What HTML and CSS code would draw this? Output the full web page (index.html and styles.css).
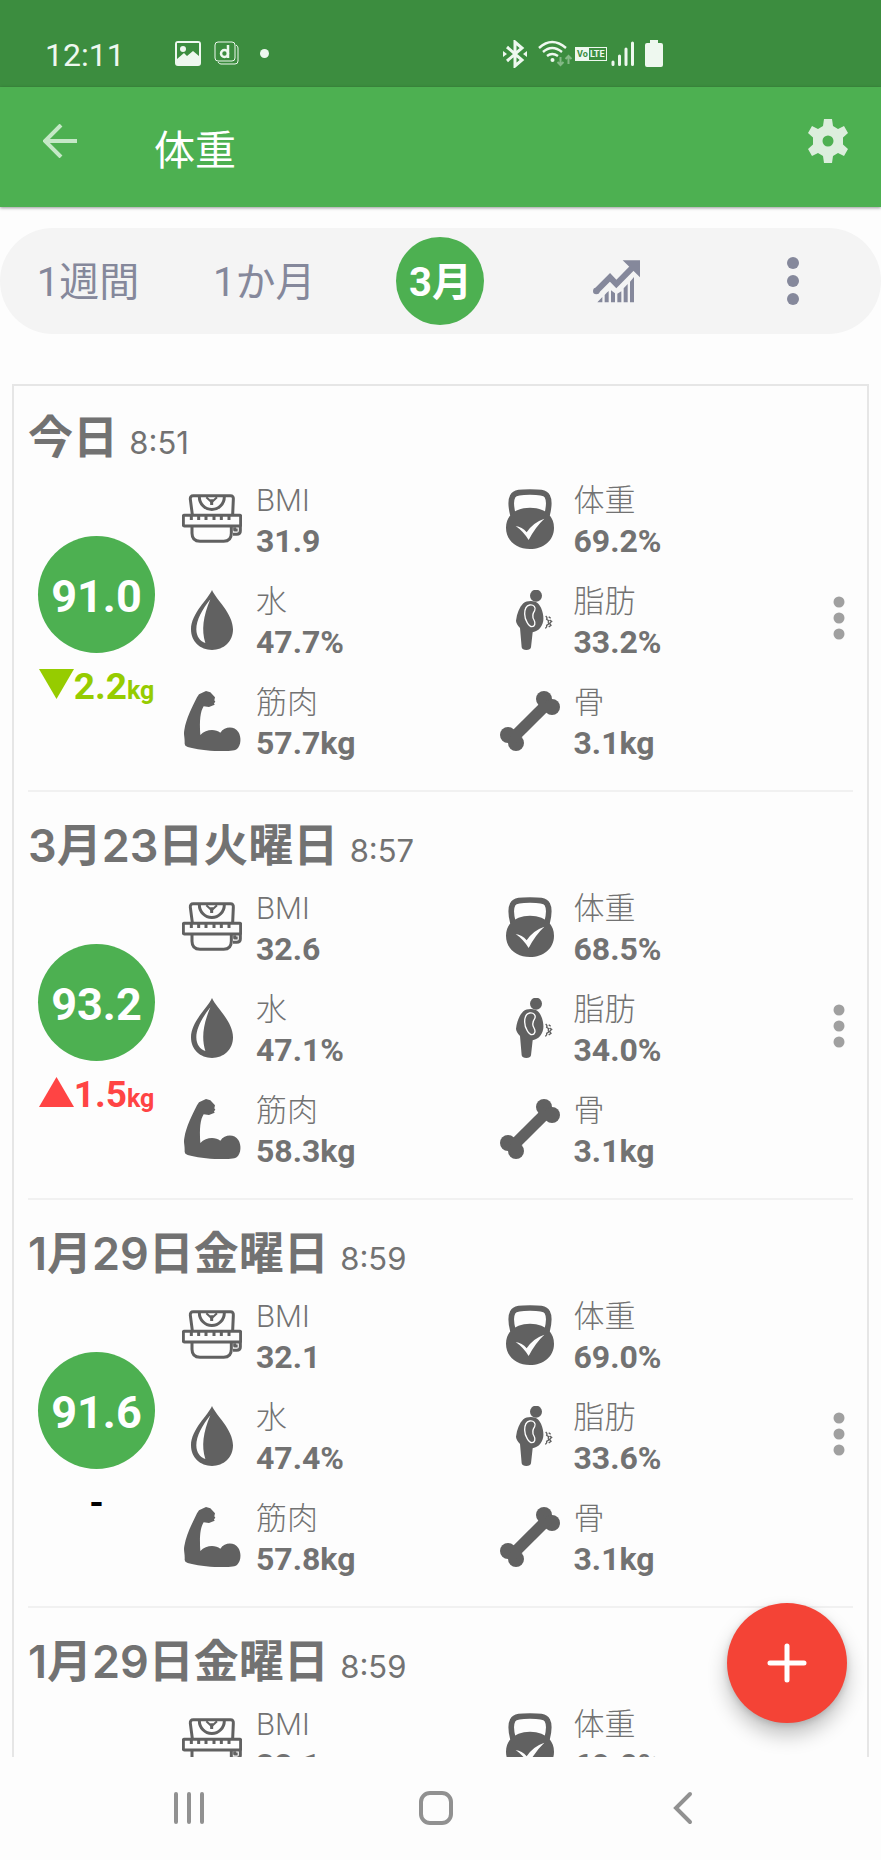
FILE: index.html
```html
<!DOCTYPE html>
<html lang="ja">
<head>
<meta charset="utf-8">
<meta name="viewport" content="width=device-width, initial-scale=1">
<title>体重</title>
<link rel="stylesheet" href="styles.css">
</head>
<body>
<svg class="sprite" aria-hidden="true">
  <symbol id="i-bmi" viewBox="549 57 180 180">
    <g fill="none" stroke="currentColor" stroke-width="9" stroke-linejoin="round">
      <path d="M580 134 574 88Q573 77 583 77H694Q704 77 703 88L701 134"/>
      <rect x="553" y="136" width="172" height="32" rx="3"/>
      <path d="M601 80A37 38 0 0 0 676 80"/>
      <path d="M579 170V190Q579 214 603 214H674Q697 214 697 190V170"/>
      <path d="M724 168V183Q724 193 713 193H702M707 172V180H716"/>
      <path d="M577 138V150M599 138V150M621 138V150M645 138V150M667 138V150M690 138V150M638 88V105"/>
      <path stroke-width="6" d="M622 82 638 97 654 82"/>
    </g>
  </symbol>
  <symbol id="i-water" viewBox="549 360 180 180">
    <path fill="currentColor" fill-rule="evenodd" d="M639 360C650 387 702 430 702 478C702 515 674 540 639 540S576 515 576 478C576 430 628 387 639 360ZM634 388C610 418 592 450 592 478C592 500 604 515 619 519C607 480 612 440 634 388Z"/>
  </symbol>
  <symbol id="i-muscle" viewBox="549 663 180 180">
    <path fill="currentColor" d="M621 663 634 667 648 682 646 691 649 695 645 700 647 704 630 711 614 709C604 725 601 750 604 795C620 778 648 776 664 788C678 768 706 768 718 786C728 802 726 826 714 837C705 843 690 843 660 843C625 843 590 838 566 831Q557 828 557 822C558 800 553 795 556 780C562 745 578 715 594 682L600 673Z"/>
  </symbol>
  <symbol id="i-weight" viewBox="60 57 180 180">
    <path fill="none" stroke="currentColor" stroke-width="17" d="M99 135C92 108 92 90 98 79C104 66 125 66 150 66S196 66 202 79C208 90 208 108 201 135"/>
    <path fill="currentColor" fill-rule="evenodd" d="M150 113C175 113 197 122 209 136C217 146 222 158 222 173C222 212 190 237 150 237S78 212 78 173C78 158 83 146 91 136C103 122 125 113 150 113ZM107 168Q130 184 146 210Q165 172 193 146Q158 158 140 187Q126 170 107 168Z"/>
  </symbol>
  <symbol id="i-fat" viewBox="60 360 180 180">
    <circle cx="168" cy="377" r="18" fill="currentColor"/>
    <path fill="currentColor" d="M130 400C140 391 165 390 175 401C188 415 194 445 188 460C182 478 170 484 158 487L153 532Q151 540 139 540T125 532L120 474Q108 460 108 452C111 430 118 412 130 400Z"/>
    <path fill="none" stroke="#fff" stroke-width="4" d="M149 405C161 403 169 412 164 422C157 432 157 442 162 450C168 460 164 470 156 470C147 470 134 450 134 432C134 418 138 407 149 405Z"/>
    <path fill="none" stroke="currentColor" stroke-width="4" d="M197 438Q203 443 200 448L206 452Q203 457 206 462L200 466Q202 471 196 475M206 440 212 445M209 450 215 454 209 460 213 466 206 471"/>
  </symbol>
  <symbol id="i-bone" viewBox="60 663 180 180">
    <g fill="currentColor"><circle cx="192" cy="687" r="24"/><circle cx="216" cy="711" r="24"/><circle cx="84" cy="795" r="24"/><circle cx="108" cy="819" r="24"/></g>
    <path stroke="currentColor" stroke-width="34" d="M98 805 202 701"/>
  </symbol>
  <symbol id="i-more" viewBox="0 0 12 44">
    <g fill="currentColor"><circle cx="6" cy="6" r="5.5"/><circle cx="6" cy="22" r="5.5"/><circle cx="6" cy="38" r="5.5"/></g>
  </symbol>
</svg>

<div class="status">
  <span class="clock">12:11</span>
  <svg class="st-image" viewBox="0 0 26 25"><path fill="currentColor" fill-rule="evenodd" d="M3 0H23Q26 0 26 3V22Q26 25 23 25H3Q0 25 0 22V3Q0 0 3 0ZM2 2V18L9 12 12 15 18 10 24 15V2Z"/><circle cx="8" cy="8" r="3" fill="currentColor"/></svg>
  <svg class="st-app" viewBox="0 0 25 25"><g fill="none" stroke="currentColor"><rect x="1" y="1" width="20" height="19" rx="3"/><path d="M4 21Q5 23 7 23H21Q24 23 24 20V7Q24 5 22 4"/><path stroke-width="2.5" d="M14 4V17"/><circle cx="10.500" cy="12.500" r="3.500" stroke-width="2.500"/></g></svg>
  <span class="st-dot"></span>
  <span class="st-space"></span>
  <svg class="st-bt" viewBox="0 0 24 28"><path fill="none" stroke="currentColor" stroke-width="3" d="M4 7 19 20 12 26V2L19 8 4 21"/><path fill="currentColor" d="M0 11 4 14 0 17ZM24 11 20 14 24 17Z"/></svg>
  <svg class="st-wifi" viewBox="0 0 35 27"><g fill="none" stroke="currentColor" stroke-width="2.400"><path d="M1 8Q14-4 28 8"/><path d="M5 12Q14 4 24 12"/><path d="M9 16Q14 12 20 16"/></g><circle cx="14.500" cy="20" r="2" fill="currentColor"/><g fill="none" stroke="#84b986" stroke-width="2"><path d="M22.500 17V25M19.500 22 22.500 25 25.500 22M30.500 24V16M27.500 19 30.500 16 33.500 19"/></g></svg>
  <svg class="st-volte" viewBox="0 0 32 14"><rect x=".5" y=".5" width="31" height="13" fill="none" stroke="currentColor"/><path fill="currentColor" d="M0 0H14V14H0Z"/><text x="2" y="10" fill="#3c8d3f">Vo</text><text x="15" y="10" fill="currentColor">LTE</text></svg>
  <svg class="st-signal" viewBox="0 0 24 26"><path stroke="currentColor" stroke-width="3" stroke-linecap="round" d="M2 21V23.500M8.500 15V23.500M15 8V23.500M21.500 2V23.500"/></svg>
  <svg class="st-battery" viewBox="0 0 18 27"><path fill="currentColor" d="M5 0H13V3H16Q18 3 18 5V25Q18 27 16 27H2Q0 27 0 25V5Q0 3 2 3H5Z"/></svg>
</div>

<header class="appbar">
  <button class="plain back" aria-label="戻る"><svg viewBox="0 0 34 34"><path fill="none" stroke="currentColor" stroke-width="4" d="M34 17H3M18 1 2 17 18 33"/></svg></button>
  <h1>体重</h1>
  <button class="plain settings" aria-label="設定"><svg viewBox="-22 -22 44 44"><path fill="currentColor" fill-rule="evenodd" d="M-4-22H4L5-15 10-12 16-15 20-8 15-3.500V3.500L20 8 16 15 10 12 5 15 4 22H-4L-5 15-10 12-16 15-20 8-15 3.500V-3.500L-20-8-16-15-10-12-5-15ZM0-5.500A5.500 5.500 0 1 0 0 5.500 5.500 5.500 0 1 0 0-5.500Z"/></svg></button>
</header>

<main class="content">
  <nav class="tabs">
    <button class="tab">1週間</button>
    <button class="tab">1か月</button>
    <button class="tab current"><span class="active">3月</span></button>
    <button class="tab icon" aria-label="グラフ"><svg class="trend" viewBox="456 146 147 132"><path fill="none" stroke="currentColor" stroke-width="18" d="M468 243 510 201 529 221 584 165"/><circle cx="469" cy="242" r="10" fill="currentColor"/><path fill="currentColor" d="M548 150H600V201ZM472 276 487 260V276ZM494 254 500 247 506 242V276H494ZM513 240 525 249V276H513ZM532 250 544 243V276H532ZM551 234 563 221V276H551ZM570 214 582 200V276H570Z"/></svg></button>
    <button class="tab icon" aria-label="その他"><svg class="tab-more" viewBox="0 0 14 50"><g fill="currentColor"><circle cx="7" cy="7" r="6"/><circle cx="7" cy="25" r="6"/><circle cx="7" cy="43" r="6"/></g></svg></button>
  </nav>

  <section class="card">
    <article class="record">
      <h2>今日 <time>8:51</time></h2>
      <div class="body">
        <div class="weight"><span class="disc">91.0</span><p class="delta down"><svg viewBox="0 0 35 30"><path fill="currentColor" d="M0 0H35L17.500 30Z"/></svg>2.2<small>kg</small></p></div>
        <dl class="metrics">
          <div class="metric"><svg><use href="#i-bmi"/></svg><dt>BMI</dt><dd>31.9</dd></div>
          <div class="metric"><svg><use href="#i-weight"/></svg><dt>体重</dt><dd>69.2%</dd></div>
          <div class="metric"><svg><use href="#i-water"/></svg><dt>水</dt><dd>47.7%</dd></div>
          <div class="metric"><svg><use href="#i-fat"/></svg><dt>脂肪</dt><dd>33.2%</dd></div>
          <div class="metric"><svg><use href="#i-muscle"/></svg><dt>筋肉</dt><dd>57.7kg</dd></div>
          <div class="metric"><svg><use href="#i-bone"/></svg><dt>骨</dt><dd>3.1kg</dd></div>
        </dl>
        <button class="plain more" aria-label="メニュー"><svg><use href="#i-more"/></svg></button>
      </div>
    </article>

    <article class="record">
      <h2>3月23日火曜日 <time>8:57</time></h2>
      <div class="body">
        <div class="weight"><span class="disc">93.2</span><p class="delta up"><svg viewBox="0 0 35 30"><path fill="currentColor" d="M0 30H35L17.500 0Z"/></svg>1.5<small>kg</small></p></div>
        <dl class="metrics">
          <div class="metric"><svg><use href="#i-bmi"/></svg><dt>BMI</dt><dd>32.6</dd></div>
          <div class="metric"><svg><use href="#i-weight"/></svg><dt>体重</dt><dd>68.5%</dd></div>
          <div class="metric"><svg><use href="#i-water"/></svg><dt>水</dt><dd>47.1%</dd></div>
          <div class="metric"><svg><use href="#i-fat"/></svg><dt>脂肪</dt><dd>34.0%</dd></div>
          <div class="metric"><svg><use href="#i-muscle"/></svg><dt>筋肉</dt><dd>58.3kg</dd></div>
          <div class="metric"><svg><use href="#i-bone"/></svg><dt>骨</dt><dd>3.1kg</dd></div>
        </dl>
        <button class="plain more" aria-label="メニュー"><svg><use href="#i-more"/></svg></button>
      </div>
    </article>

    <article class="record">
      <h2>1月29日金曜日 <time>8:59</time></h2>
      <div class="body">
        <div class="weight"><span class="disc">91.6</span><p class="delta">-</p></div>
        <dl class="metrics">
          <div class="metric"><svg><use href="#i-bmi"/></svg><dt>BMI</dt><dd>32.1</dd></div>
          <div class="metric"><svg><use href="#i-weight"/></svg><dt>体重</dt><dd>69.0%</dd></div>
          <div class="metric"><svg><use href="#i-water"/></svg><dt>水</dt><dd>47.4%</dd></div>
          <div class="metric"><svg><use href="#i-fat"/></svg><dt>脂肪</dt><dd>33.6%</dd></div>
          <div class="metric"><svg><use href="#i-muscle"/></svg><dt>筋肉</dt><dd>57.8kg</dd></div>
          <div class="metric"><svg><use href="#i-bone"/></svg><dt>骨</dt><dd>3.1kg</dd></div>
        </dl>
        <button class="plain more" aria-label="メニュー"><svg><use href="#i-more"/></svg></button>
      </div>
    </article>

    <article class="record">
      <h2>1月29日金曜日 <time>8:59</time></h2>
      <div class="body">
        <div class="weight"><span class="disc"></span></div>
        <dl class="metrics">
          <div class="metric"><svg><use href="#i-bmi"/></svg><dt>BMI</dt><dd>32.1</dd></div>
          <div class="metric"><svg><use href="#i-weight"/></svg><dt>体重</dt><dd>69.0%</dd></div>
        </dl>
        <button class="plain more" aria-label="メニュー"></button>
      </div>
    </article>
  </section>

  <button class="fab" aria-label="追加"><svg viewBox="0 0 40 40"><path stroke="currentColor" stroke-width="5" stroke-linecap="round" d="M20 3V37M3 20H37"/></svg></button>
</main>

<nav class="sysnav">
  <button class="plain" aria-label="最近"><svg viewBox="0 0 36 36"><path stroke="currentColor" stroke-width="4" stroke-linecap="round" d="M5 4V32M18 4V32M31 4V32"/></svg></button>
  <button class="plain" aria-label="ホーム"><svg viewBox="0 0 36 36"><rect x="3" y="3" width="30" height="30" rx="9" fill="none" stroke="currentColor" stroke-width="4"/></svg></button>
  <button class="plain" aria-label="戻る"><svg viewBox="0 0 36 36"><path fill="none" stroke="currentColor" stroke-width="4" stroke-linecap="round" d="M25 4 11 18 25 32"/></svg></button>
</nav>
</body>
</html>
```
FILE: styles.css
```css
* { box-sizing: border-box; }

body {
  margin: 0;
  height: 100vh;
  display: flex;
  flex-direction: column;
  background: #fdfdfd;
  color: #727272;
  font-family: Roboto, "Noto Sans CJK JP", sans-serif;
}

svg { display: block; flex: none; }
h1, h2, p, dl, dt, dd { margin: 0; }
button { font: inherit; color: inherit; border: 0; padding: 0; background: none; }
.sprite { position: absolute; width: 0; height: 0; }
.plain { display: flex; align-items: center; justify-content: center; }

/* status bar */
.status {
  flex: none;
  display: flex;
  align-items: center;
  height: 87px;
  padding: 20px 218px 0 45px;
  background: #3c8d3f;
  color: #eef8ef;
}
.clock { font-size: 32px; line-height: 40px; width: 130px; padding-top: 3px; }
.st-image { width: 26px; height: 25px; }
.st-app { width: 25px; height: 25px; margin-left: 13px; }
.st-dot { width: 9px; height: 9px; margin-left: 21px; border-radius: 50%; background: currentColor; }
.st-space { flex: 1; }
.st-bt { width: 24px; height: 28px; }
.st-wifi { width: 35px; height: 27px; margin-left: 11px; }
.st-volte { width: 32px; height: 14px; margin-left: 2px; font: bold 9px Roboto, sans-serif; }
.st-signal { width: 24px; height: 26px; margin-left: 4px; }
.st-battery { width: 18px; height: 27px; margin-left: 10px; }

/* app bar */
.appbar {
  flex: none;
  display: flex;
  align-items: center;
  height: 120px;
  padding: 0 31px 13px 43px;
  background: #4db051;
  box-shadow: 0 1px 3px rgba(0, 0, 0, .4);
  z-index: 1;
}
.back { width: 34px; height: 48px; color: #c5e8c7; }
.back svg { width: 34px; height: 34px; }
.appbar h1 {
  flex: 1;
  margin-left: 77px;
  padding-top: 20px;
  color: #fff;
  font-size: 41px;
  font-weight: 400;
  line-height: 48px;
}
.settings { color: #dceedd; }
.settings svg { width: 44px; height: 44px; }

.content { position: relative; flex: 1; min-height: 0; overflow: hidden; }

/* period tabs */
.tabs {
  display: grid;
  grid-template-columns: repeat(5, 1fr);
  height: 106px;
  margin-top: 21px;
  border-radius: 53px;
  background: #f4f4f4;
  color: #85889b;
}
.tab {
  display: flex;
  align-items: center;
  justify-content: center;
  padding-top: 4px;
  font-size: 40px;
  line-height: 48px;
}
.current, .icon { padding-top: 0; }
.active {
  display: grid;
  place-items: center;
  width: 88px;
  height: 88px;
  padding-top: 4px;
  border-radius: 50%;
  background: #4db051;
  color: #fff;
  font-weight: 700;
}
.trend { width: 49px; height: 44px; }
.tab-more { width: 14px; height: 50px; }

/* history */
.card {
  margin: 50px 12px 0;
  padding: 0 14px;
  border: 2px solid #e6e6e6;
  border-bottom: 0;
}
.record { padding: 26px 0 27px; border-bottom: 2px solid #f1f1f1; }
.record:first-child { padding-top: 24px; }
.record h2 {
  font-family: Inter, "Noto Sans CJK JP", sans-serif;
  font-size: 45px;
  font-weight: 600;
  line-height: 56px;
}
.record time { font-size: 31px; font-weight: 400; line-height: 40px; }
.body { display: flex; margin-top: 15px; padding: 0 1px 0 10px; }
.weight { flex: none; width: 117px; margin-right: 27px; padding-top: 55px; }
.disc {
  display: grid;
  place-items: center;
  width: 117px;
  height: 117px;
  padding-top: 4px;
  border-radius: 50%;
  background: #4db051;
  color: #fff;
  font-size: 45px;
  font-weight: 700;
}
.delta {
  display: flex;
  align-items: baseline;
  justify-content: center;
  margin-top: 12px;
  color: #000;
  font-size: 37px;
  font-weight: 700;
  line-height: 44px;
}
.delta svg { width: 35px; height: 30px; }
.delta small { font-size: 25px; }
.down { color: #96cc00; }
.up { color: #ff4444; }

.metrics {
  flex: 1;
  display: grid;
  grid-template-columns: 1fr 1fr;
  align-content: start;
  row-gap: 21px;
  font-size: 32px;
  line-height: 40px;
}
.metric { display: grid; grid-template-columns: 60px 1fr; column-gap: 14px; }
.metric svg { grid-row: 1 / 3; width: 60px; height: 60px; margin-top: 8px; color: #616161; }
.metric dt { font-size: 31px; font-weight: 300; }
.metric dd { font-weight: 700; }
.more { width: 26px; margin-left: 9px; padding-bottom: 8px; color: #a0a0a0; }
.more svg { width: 12px; height: 44px; }

.fab {
  position: absolute;
  right: 34px;
  bottom: 34px;
  display: grid;
  place-items: center;
  width: 120px;
  height: 120px;
  border-radius: 50%;
  background: #f44336;
  color: #fff;
  box-shadow: 0 12px 20px rgba(0, 0, 0, .24), 0 2px 6px rgba(0, 0, 0, .14);
}
.fab svg { width: 40px; height: 40px; }

/* system navigation */
.sysnav {
  flex: none;
  display: grid;
  grid-template-columns: repeat(3, 1fr);
  height: 103px;
  padding: 0 75px 2px 65px;
  color: #919191;
}
.sysnav svg { width: 36px; height: 36px; }
```
